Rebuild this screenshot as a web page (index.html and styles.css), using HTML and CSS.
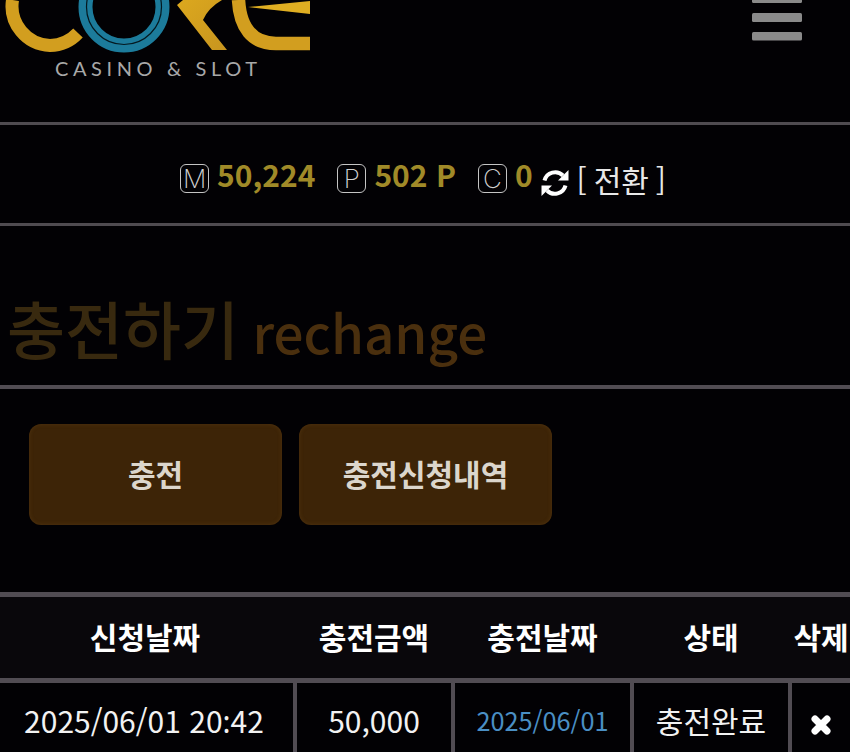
FILE: index.html
```html
<!DOCTYPE html>
<html lang="ko">

<head>
    <meta charset="UTF-8">
    <title>충전하기</title>
    <link rel="stylesheet" href="styles.css">
</head>

<body>
    <header class="top">
        <div class="logo">
            <svg class="logo-mark" width="320" height="56" viewBox="0 0 320 56">
                <defs>
                    <linearGradient id="gold" x1="0" y1="0" x2="1" y2="1">
                        <stop offset="0" stop-color="#dca81e"/>
                        <stop offset="1" stop-color="#c8951f"/>
                    </linearGradient>
                </defs>
                <path d="M12.5 0 A39.5 39.5 0 0 0 50 45.5 A39.5 39.5 0 0 0 78 33" fill="none" stroke="#d29e1f" stroke-width="13"/>
                <circle cx="124" cy="7" r="38.5" fill="none" stroke="#1c7b9b" stroke-width="14"/>
                <circle cx="124" cy="7" r="37.5" fill="none" stroke="#04181f" stroke-width="1.2"/>
                <path d="M177 5 L212 50 L227 50 L203 20 Q208 8 222 0 L183 0 Z" fill="url(#gold)"/>
                <path d="M238.5 0 C240 28 252 43.5 276 43.5 L310 43.5" fill="none" stroke="#d29e1f" stroke-width="13.5"/>
                <path d="M248 7 L310 1 L310 14 Z" fill="#dfae22"/>
            </svg>
            <div class="logo-text">CASINO &amp; SLOT</div>
        </div>
        <svg class="menu-icon" width="50" height="41" viewBox="0 0 50 41">
            <rect x="0" y="-6" width="50" height="9" rx="1.5"/>
            <rect x="0" y="13" width="50" height="9" rx="1.5"/>
            <rect x="0" y="32" width="50" height="8.5" rx="1.5"/>
        </svg>
    </header>

    <section class="wallet">
        <span class="badge">M</span>
        <span class="amount">50,224</span>
        <span class="badge">P</span>
        <span class="amount">502 P</span>
        <span class="badge">C</span>
        <span class="amount amount-c">0</span>
        <svg class="sync-icon" width="28" height="28" viewBox="0 0 28 28">
            <path d="M3.5 11.5 A11 11 0 0 1 22 6.5" fill="none" stroke="#fff" stroke-width="4"/>
            <path d="M27.5 1 V11.5 H17 Z" fill="#fff"/>
            <path d="M24.5 16.5 A11 11 0 0 1 6 21.5" fill="none" stroke="#fff" stroke-width="4"/>
            <path d="M0.5 27 V16.5 H11 Z" fill="#fff"/>
        </svg>
        <span class="swap">[ 전환 ]</span>
    </section>

    <h1 class="page-title">충전하기 <span class="page-title-en">rechange</span></h1>

    <nav class="tabs">
        <a class="tab">충전</a>
        <a class="tab">충전신청내역</a>
    </nav>

    <table class="history">
        <colgroup>
            <col class="col-req">
            <col class="col-amount">
            <col class="col-date">
            <col class="col-state">
            <col class="col-del">
        </colgroup>
        <thead>
            <tr>
                <th>신청날짜</th>
                <th>충전금액</th>
                <th>충전날짜</th>
                <th>상태</th>
                <th>삭제</th>
            </tr>
        </thead>
        <tbody>
            <tr>
                <td>2025/06/01 20<span class="colon">:</span>42</td>
                <td>50,000</td>
                <td class="done-date">2025/06/01</td>
                <td>충전완료</td>
                <td>
                    <svg class="del-icon" width="22" height="22" viewBox="0 0 22 22">
                        <path d="M5 5 L17 17 M17 5 L5 17" stroke="#fff" stroke-width="7" stroke-linecap="round"/>
                    </svg>
                </td>
            </tr>
        </tbody>
    </table>
</body>

</html>
```

FILE: styles.css
```css
html,
body {
    margin: 0;
    height: 752px;
    overflow: hidden;
    background: #020104;
    color: #fff;
    font-family: "Noto Sans CJK KR", "Noto Sans", sans-serif;
}

/* 상단 로고 */
.top {
    height: 122px;
    display: flex;
    justify-content: space-between;
    align-items: flex-start;
    border-bottom: 3px solid #4f4b50;
}

.logo-mark {
    display: block;
}

.logo-text {
    margin: 2px 0 0 55px;
    font-family: Lato, "Liberation Sans", sans-serif;
    font-size: 20px;
    line-height: 20px;
    font-weight: 400;
    letter-spacing: 4.6px;
    color: #a8a8a8;
}

.menu-icon {
    margin-right: 48px;
    fill: #8a8a8a;
}

/* 보유 금액 */
.wallet {
    height: 98px;
    display: flex;
    justify-content: center;
    align-items: center;
    padding-right: 4px;
    border-bottom: 3px solid #4f4b50;
}

.badge {
    width: 27px;
    height: 27px;
    display: flex;
    align-items: center;
    justify-content: center;
    margin-top: 9px;
    border: 1.5px solid #c4c4c4;
    border-radius: 6px;
    font-family: Inter, "Liberation Sans", sans-serif;
    font-size: 26px;
    font-weight: 200;
    color: #d0d0d0;
    overflow: hidden;
}

.amount {
    margin: 0 22px 0 8px;
    font-size: 30px;
    line-height: 40px;
    font-weight: 700;
    color: #a08a28;
}

.amount-c {
    margin-right: 8px;
}

.sync-icon {
    margin-top: 18px;
}

.swap {
    margin: 10px 0 0 8px;
    font-size: 30px;
    line-height: 40px;
    font-weight: 400;
    word-spacing: -1.5px;
    color: #e8e8e8;
}

/* 페이지 제목 */
.page-title {
    height: 163px;
    margin: 0;
    padding-left: 7px;
    box-sizing: border-box;
    font-size: 63px;
    line-height: 202px;
    font-weight: 500;
    word-spacing: -4px;
    color: #38290f;
    border-bottom: 4px solid #514c53;
    overflow: hidden;
}

.page-title-en {
    font-size: 53px;
    color: #4a2f0e;
}

/* 탭 버튼 */
.tabs {
    display: flex;
    gap: 17px;
    padding: 35px 0 67px 29px;
}

.tab {
    width: 253px;
    height: 98px;
    padding-bottom: 3px;
    display: flex;
    align-items: center;
    justify-content: center;
    background: #3d2407;
    border-radius: 12px;
    box-shadow: inset 0 0 4px rgba(130, 90, 35, 0.3);
    font-size: 30px;
    font-weight: 700;
    color: #dcd6cc;
}

/* 신청 내역 */
.history {
    width: 852px;
    table-layout: fixed;
    border-collapse: collapse;
    border-top: 5px solid #514c53;
}

.col-req { width: 295px; }
.col-amount { width: 158px; }
.col-date { width: 179px; }
.col-state { width: 158px; }
.col-del { width: 62px; }

.history th {
    height: 77px;
    padding: 0 0 4px;
    background: #09070b;
    font-size: 30px;
    font-weight: 700;
    border-bottom: 5px solid #514c53;
}

.history th:first-child {
    padding-right: 5px;
}

.history td {
    height: 73px;
    padding: 0 0 5px;
    text-align: center;
    font-size: 30px;
    font-weight: 400;
    color: #f2f2f2;
    border-left: 4px solid #514c53;
}

.history td:first-child {
    padding-right: 5px;
    border-left: 0;
}

.history .done-date {
    font-size: 25.3px;
    color: #4a8fc4;
}

/* 시간 콜론이 위로 뜨지 않게 */
.colon {
    font-family: "Noto Sans", sans-serif;
}

.del-icon {
    display: block;
    margin: 10px 0 0 18px;
}
```
